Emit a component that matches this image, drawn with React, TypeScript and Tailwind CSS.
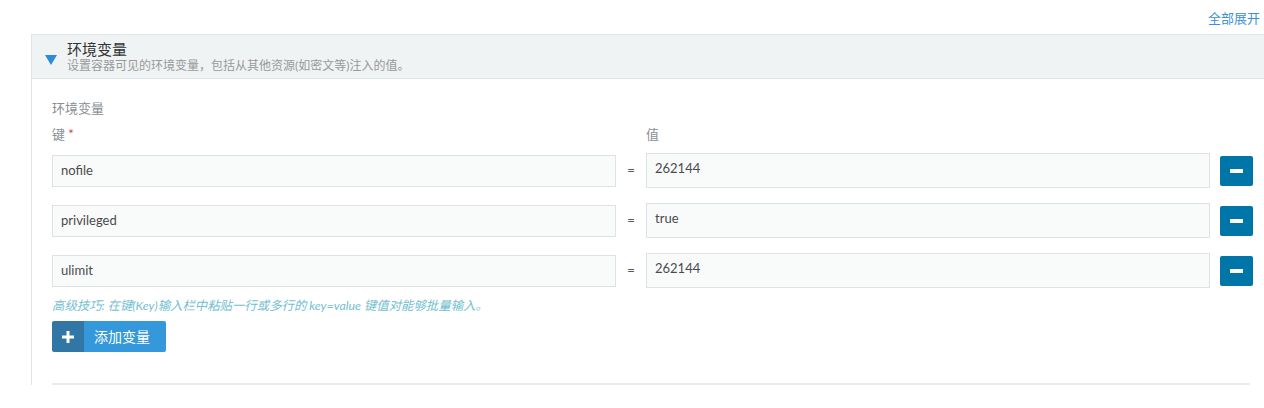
import React from "react";

const rows = [
  { k: "nofile", v: "262144" },
  { k: "privileged", v: "true" },
  { k: "ulimit", v: "262144" },
];

export default function App() {
  return (
    <div className="w-[1264px] h-[408px] overflow-hidden bg-white" style={{ fontFamily: 'Lato, "Noto Sans CJK SC", sans-serif' }}>
      <div className="h-[34px] flex justify-end pr-[4px] pt-[10px]">
        <span className="text-[13px] leading-[17px] text-[#3d8fd6]">全部展开</span>
      </div>
      <div className="ml-[31px] border-l border-t border-[#dfe5e7]">
        <div className="h-[44px] bg-[#eff3f4] border-b border-[#dfe5e7] flex items-center pl-[13px]">
          <svg width="12" height="10" viewBox="0 0 12 10" className="mt-[6px]">
            <polygon points="0,0 12,0 6,10" fill="#2d8bd7" />
          </svg>
          <div className="ml-[10px] flex flex-col">
            <span className="text-[15px] leading-[18px] text-[#333]">环境变量</span>
            <span className="text-[12px] leading-[15px] text-[#999]">设置容器可见的环境变量，包括从其他资源(如密文等)注入的值。</span>
          </div>
        </div>
        <div className="pl-[20px] pt-[19px]">
          <div className="text-[13px] leading-[20px] text-[#8a8f94]">环境变量</div>
          <div className="flex mt-[6px] text-[13px] leading-[20px] text-[#8a8f94]">
            <div className="w-[564px]">
              键 <span className="text-[#e0383e]">*</span>
            </div>
            <div className="w-[30px]" />
            <div>值</div>
          </div>
          <div className="mt-[9px] flex flex-col gap-[15px]">
            {rows.map((r) => (
              <div key={r.k} className="flex items-center h-[35px]">
                <div className="w-[564px] h-[32px] border border-[#dde3e5] bg-[#f9fbfb] flex items-center pl-[8px] text-[13px] text-[#4a4a4a]">
                  {r.k}
                </div>
                <div className="w-[30px] text-center text-[13px] text-[#555]">=</div>
                <div className="w-[564px] h-[35px] border border-[#dde3e5] bg-[#f9fbfb] flex items-center pl-[8px] pb-[4px] text-[13px] text-[#4a4a4a]">
                  {r.v}
                </div>
                <div className="ml-[10px] w-[33px] h-[30px] bg-[#0076a8] rounded-[2px] flex items-center justify-center">
                  <div className="w-[13px] h-[4px] bg-white" />
                </div>
              </div>
            ))}
          </div>
          <div className="mt-[10px] text-[12.4px] leading-[16px] italic text-[#74c0d2]">
            高级技巧: 在键(Key)输入栏中粘贴一行或多行的 key=value 键值对能够批量输入。
          </div>
          <div className="mt-[7px] flex h-[31px] w-[114px] rounded-[2px] overflow-hidden">
            <div className="w-[32px] bg-[#3276a5] flex items-center justify-center">
              <svg width="12" height="12" viewBox="0 0 12 12">
                <rect x="4.5" y="0" width="3" height="12" fill="#fff" />
                <rect x="0" y="4.5" width="12" height="3" fill="#fff" />
              </svg>
            </div>
            <div className="flex-1 bg-[#3498db] flex items-center pl-[10px] text-[14px] text-white">添加变量</div>
          </div>
          <div className="mt-[31px] w-[1198px] h-[2px] bg-[#ebebeb]" />
        </div>
      </div>
    </div>
  );
}
